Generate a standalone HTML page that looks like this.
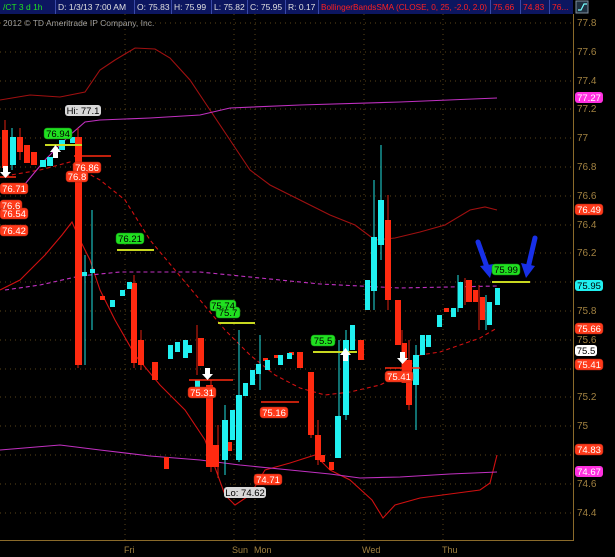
<!DOCTYPE html><html><head><style>
body{margin:0;background:#000;width:615px;height:557px;overflow:hidden;font-family:"Liberation Sans",sans-serif}
</style></head><body>
<svg width="615" height="557" xmlns="http://www.w3.org/2000/svg" style="display:block">
<rect width="615" height="557" fill="#000"/>
<rect x="0" y="0" width="573" height="14" fill="#0c1660"/>
<g stroke="#3a4aa8" stroke-width="1">
<line x1="55.5" y1="0" x2="55.5" y2="14"/><line x1="134.5" y1="0" x2="134.5" y2="14"/><line x1="171.5" y1="0" x2="171.5" y2="14"/><line x1="211.5" y1="0" x2="211.5" y2="14"/><line x1="247.5" y1="0" x2="247.5" y2="14"/><line x1="285.5" y1="0" x2="285.5" y2="14"/><line x1="318.5" y1="0" x2="318.5" y2="14"/><line x1="490.5" y1="0" x2="490.5" y2="14"/><line x1="520.5" y1="0" x2="520.5" y2="14"/><line x1="549.5" y1="0" x2="549.5" y2="14"/>
</g>
<g font-size="8.5" fill="#e0e0e0">
<text x="3" y="10" fill="#20e020">/CT 3 d 1h</text>
<text x="58" y="10">D: 1/3/13 7:00 AM</text>
<text x="137" y="10">O: 75.83</text>
<text x="174" y="10">H: 75.99</text>
<text x="214" y="10">L: 75.82</text>
<text x="250" y="10">C: 75.95</text>
<text x="288" y="10">R: 0.17</text>
<text x="321" y="10" fill="#ff2020" textLength="166" lengthAdjust="spacingAndGlyphs">BollingerBandsSMA (CLOSE, 0, 25, -2.0, 2.0)</text>
<text x="493" y="10" fill="#ff2020">75.66</text>
<text x="523" y="10" fill="#ff2020">74.83</text>
<text x="552" y="10" fill="#ff2020">76...</text>
</g>
<rect x="576" y="1" width="12" height="12" fill="#203040" stroke="#8090a0"/>
<path d="M578 10h3l3-6h3" stroke="#7ff" fill="none" stroke-width="1.2"/>
<text x="3" y="26" font-size="8.5" fill="#a0a0a0">2012 © TD Ameritrade IP Company, Inc.</text>
<g stroke="#5a4418" stroke-dasharray="1,4" stroke-width="1">
<line x1="0" y1="23" x2="573" y2="23"/><line x1="0" y1="52" x2="573" y2="52"/><line x1="0" y1="81" x2="573" y2="81"/><line x1="0" y1="109" x2="573" y2="109"/><line x1="0" y1="138" x2="573" y2="138"/><line x1="0" y1="167" x2="573" y2="167"/><line x1="0" y1="196" x2="573" y2="196"/><line x1="0" y1="225" x2="573" y2="225"/><line x1="0" y1="253" x2="573" y2="253"/><line x1="0" y1="282" x2="573" y2="282"/><line x1="0" y1="311" x2="573" y2="311"/><line x1="0" y1="340" x2="573" y2="340"/><line x1="0" y1="369" x2="573" y2="369"/><line x1="0" y1="397" x2="573" y2="397"/><line x1="0" y1="426" x2="573" y2="426"/><line x1="0" y1="455" x2="573" y2="455"/><line x1="0" y1="484" x2="573" y2="484"/><line x1="0" y1="513" x2="573" y2="513"/>
<line x1="125" y1="14" x2="125" y2="540"/><line x1="234" y1="14" x2="234" y2="540"/><line x1="255" y1="14" x2="255" y2="540"/><line x1="364" y1="14" x2="364" y2="540"/><line x1="443" y1="14" x2="443" y2="540"/>
</g>
<g stroke="#8a6a2a"><line x1="573.5" y1="14" x2="573.5" y2="541"/><line x1="0" y1="540.5" x2="574" y2="540.5"/></g>
<g font-size="10" fill="#a08040">
<text x="577" y="26">77.8</text><text x="577" y="55">77.6</text><text x="577" y="84">77.4</text><text x="577" y="112">77.2</text><text x="577" y="141">77</text><text x="577" y="170">76.8</text><text x="577" y="199">76.6</text><text x="577" y="228">76.4</text><text x="577" y="256">76.2</text><text x="577" y="314">75.8</text><text x="577" y="343">75.6</text><text x="577" y="400">75.2</text><text x="577" y="429">75</text><text x="577" y="487">74.6</text><text x="577" y="516">74.4</text>
<text x="124" y="553" font-size="9">Fri</text><text x="232" y="553" font-size="9">Sun</text><text x="254" y="553" font-size="9">Mon</text><text x="362" y="553" font-size="9">Wed</text><text x="442" y="553" font-size="9">Thu</text>
</g>
<g fill="none" stroke-width="1.1">
<polyline stroke="#a01010" points="0,100 30,95 60,97 85,92 100,70 115,60 135,48 155,49 170,58 190,80 210,110 230,140 250,170 270,185 290,195 310,205 330,215 355,225 375,240 395,238 420,232 445,225 470,210 485,207 497,210"/>
<polyline stroke="#d01010" points="0,290 20,280 45,255 62,235 72,222 80,240 90,260 100,290 115,320 135,355 160,385 185,410 205,440 225,495 235,505 250,495 265,470 290,463 315,455 330,470 350,480 372,500 383,518 395,505 420,498 450,494 480,490 490,483 497,455"/>
<polyline stroke="#d01010" stroke-dasharray="4,3" points="5,176 40,170 70,162 78,168 100,180 125,200 150,240 175,270 200,300 225,330 250,355 275,375 300,388 325,395 350,392 380,385 400,375 420,355 440,352 460,345 480,338 497,328"/>
<polyline stroke="#c030c0" points="20,190 45,160 70,135 85,122 100,120 150,118 200,115 230,108 300,105 400,102 497,98"/>
<polyline stroke="#c030c0" points="0,450 60,445 100,450 150,456 200,460 240,465 290,470 330,474 360,478 400,477 450,474 497,472"/>
<polyline stroke="#c030c0" stroke-dasharray="4,3" points="5,290 40,285 80,276 120,272 200,272 260,278 320,284 400,288 497,286"/>
</g>
<g>
<g stroke="#e02010"><line x1="5" y1="120" x2="5" y2="172"/><line x1="20" y1="128" x2="20" y2="160"/><line x1="78" y1="128" x2="78" y2="368"/><line x1="134" y1="275" x2="134" y2="368"/><line x1="141" y1="330" x2="141" y2="370"/><line x1="211" y1="380" x2="211" y2="472"/><line x1="311" y1="372" x2="311" y2="438"/><line x1="318" y1="420" x2="318" y2="465"/><line x1="388" y1="195" x2="388" y2="310"/><line x1="402" y1="330" x2="402" y2="383"/><line x1="409" y1="340" x2="409" y2="410"/><line x1="479" y1="285" x2="479" y2="330"/><line x1="465" y1="278" x2="465" y2="305"/><line x1="218" y1="425" x2="218" y2="478"/><line x1="197" y1="325" x2="197" y2="375"/></g>
<g stroke="#20e0e0"><line x1="12" y1="128" x2="12" y2="170"/><line x1="85" y1="255" x2="85" y2="365"/><line x1="92" y1="210" x2="92" y2="330"/><line x1="225" y1="405" x2="225" y2="475"/><line x1="239" y1="330" x2="239" y2="462"/><line x1="260" y1="335" x2="260" y2="390"/><line x1="339" y1="340" x2="339" y2="440"/><line x1="346" y1="330" x2="346" y2="420"/><line x1="374" y1="180" x2="374" y2="310"/><line x1="381" y1="145" x2="381" y2="260"/><line x1="416" y1="345" x2="416" y2="430"/><line x1="458" y1="275" x2="458" y2="312"/><line x1="486" y1="295" x2="486" y2="330"/></g>
<g fill="#ff2a10">
<rect x="2" y="130" width="6" height="38"/><rect x="17" y="137" width="6" height="15"/><rect x="24" y="145" width="6" height="18"/><rect x="31" y="152" width="6" height="13"/><rect x="75" y="137" width="7" height="228"/><rect x="100" y="296" width="5" height="4"/><rect x="131" y="283" width="6" height="80"/><rect x="138" y="340" width="6" height="25"/><rect x="152" y="362" width="6" height="18"/><rect x="198" y="338" width="6" height="28"/><rect x="206" y="385" width="7" height="82"/><rect x="213" y="445" width="6" height="22"/><rect x="227" y="442" width="5" height="9"/><rect x="263" y="358" width="5" height="3"/><rect x="274" y="355" width="5" height="3"/><rect x="289" y="352" width="5" height="3"/><rect x="297" y="352" width="6" height="16"/><rect x="308" y="372" width="6" height="63"/><rect x="315" y="435" width="6" height="25"/><rect x="320" y="455" width="5" height="7"/><rect x="329" y="462" width="5" height="8"/><rect x="358" y="340" width="6" height="20"/><rect x="385" y="220" width="6" height="80"/><rect x="395" y="300" width="6" height="45"/><rect x="402" y="343" width="5" height="40"/><rect x="406" y="360" width="6" height="45"/><rect x="444" y="308" width="5" height="4"/><rect x="466" y="280" width="6" height="22"/><rect x="473" y="290" width="5" height="12"/><rect x="480" y="297" width="5" height="23"/><rect x="164" y="457" width="5" height="12"/></g>
<g fill="#20f0f0">
<rect x="10" y="137" width="6" height="28"/><rect x="40" y="160" width="6" height="7"/><rect x="47" y="157" width="6" height="9"/><rect x="59" y="140" width="6" height="10"/><rect x="70" y="137" width="5" height="6"/><rect x="82" y="272" width="5" height="4"/><rect x="90" y="269" width="5" height="4"/><rect x="110" y="300" width="5" height="7"/><rect x="120" y="290" width="5" height="6"/><rect x="127" y="282" width="5" height="7"/><rect x="168" y="345" width="5" height="14"/><rect x="175" y="342" width="5" height="10"/><rect x="183" y="340" width="5" height="18"/><rect x="222" y="420" width="6" height="40"/><rect x="230" y="410" width="5" height="30"/><rect x="236" y="395" width="6" height="65"/><rect x="243" y="383" width="5" height="13"/><rect x="250" y="370" width="5" height="15"/><rect x="256" y="364" width="5" height="10"/><rect x="265" y="360" width="5" height="10"/><rect x="278" y="355" width="5" height="10"/><rect x="287" y="353" width="5" height="6"/><rect x="335" y="416" width="6" height="42"/><rect x="343" y="340" width="6" height="75"/><rect x="350" y="325" width="5" height="25"/><rect x="365" y="280" width="5" height="30"/><rect x="371" y="237" width="6" height="54"/><rect x="378" y="200" width="6" height="45"/><rect x="413" y="355" width="6" height="30"/><rect x="420" y="335" width="5" height="20"/><rect x="426" y="335" width="5" height="12"/><rect x="437" y="315" width="5" height="12"/><rect x="451" y="308" width="5" height="9"/><rect x="458" y="282" width="5" height="26"/><rect x="487" y="302" width="5" height="23"/><rect x="495" y="288" width="5" height="17"/><rect x="195" y="380" width="5" height="8"/><rect x="187" y="345" width="5" height="8"/></g>
</g>
<g stroke="#c8d820" stroke-width="2"><line x1="45" y1="145" x2="82" y2="145"/><line x1="117" y1="250" x2="154" y2="250"/><line x1="218" y1="323" x2="255" y2="323"/><line x1="313" y1="352" x2="357" y2="352"/><line x1="492" y1="282" x2="530" y2="282"/></g>
<g stroke="#ff2a10" stroke-width="1.5"><line x1="74" y1="156" x2="111" y2="156"/><line x1="0" y1="177" x2="16" y2="177"/><line x1="189" y1="380" x2="233" y2="380"/><line x1="261" y1="402" x2="299" y2="402"/><line x1="385" y1="368" x2="420" y2="368"/></g>
<g fill="#fff"><path d="M3 166h5v6h3l-5.5 6-5.5-6h3z"/><path d="M53 158h5v-6h3l-5.5-7-5.5 7h3z"/><path d="M205 368h5v6h3l-5.5 6-5.5-6h3z"/><path d="M343 361h5v-6h3l-5.5-7-5.5 7h3z"/><path d="M400 352h5v6h3l-5.5 6-5.5-6h3z"/></g>
<g stroke="#1830e8" stroke-width="5" fill="none" stroke-linecap="round"><path d="M478 242 L488 270"/><path d="M535 238 L528 268"/></g>
<g fill="#1830e8"><path d="M480 266l10 12 4-14z"/><path d="M521 263l5 15 9-12z"/></g>
<g font-size="9.5" text-anchor="middle">
<g fill="#ff3a1a" stroke="#a02010" stroke-width="0.5">
<rect x="73" y="162" width="28" height="11" rx="3"/><rect x="66" y="171" width="22" height="11" rx="3"/>
<rect x="0" y="183" width="28" height="11" rx="3"/><rect x="0" y="200" width="22" height="11" rx="3"/><rect x="0" y="208" width="28" height="11" rx="3"/><rect x="0" y="225" width="28" height="11" rx="3"/>
<rect x="188" y="387" width="28" height="11" rx="3"/><rect x="260" y="407" width="28" height="11" rx="3"/><rect x="254" y="474" width="28" height="11" rx="3"/><rect x="385" y="371" width="28" height="11" rx="3"/>
<rect x="575" y="204" width="28" height="11" rx="3"/><rect x="575" y="323" width="28" height="11" rx="3"/><rect x="575" y="359" width="28" height="11" rx="3"/><rect x="575" y="444" width="28" height="11" rx="3"/>
</g>
<g fill="#fff"><text x="87" y="171">76.86</text><text x="77" y="180">76.8</text><text x="14" y="192">76.71</text><text x="11" y="209">76.6</text><text x="14" y="217">76.54</text><text x="14" y="234">76.42</text><text x="202" y="396">75.31</text><text x="274" y="416">75.16</text><text x="268" y="483">74.71</text><text x="399" y="380">75.41</text><text x="589" y="213">76.49</text><text x="589" y="332">75.66</text><text x="589" y="368">75.41</text><text x="589" y="453">74.83</text></g>
<g fill="#20e020" stroke="#108010" stroke-width="0.5"><rect x="44" y="128" width="28" height="11" rx="3"/><rect x="116" y="233" width="28" height="11" rx="3"/><rect x="210" y="300" width="26" height="11" rx="3"/><rect x="216" y="307" width="24" height="11" rx="3"/><rect x="311" y="335" width="24" height="11" rx="3"/><rect x="492" y="264" width="28" height="11" rx="3"/></g>
<g fill="#000"><text x="58" y="137">76.94</text><text x="130" y="242">76.21</text><text x="223" y="309">75.74</text><text x="228" y="316">75.7</text><text x="323" y="344">75.5</text><text x="506" y="273">75.99</text></g>
<rect x="65" y="105" width="36" height="11" rx="3" fill="#d8d8d8"/><text x="83" y="114" fill="#000">Hi: 77.1</text>
<rect x="224" y="487" width="42" height="11" rx="3" fill="#d8d8d8"/><text x="245" y="496" fill="#000">Lo: 74.62</text>
<rect x="575" y="92" width="28" height="11" rx="3" fill="#ff30e0"/><text x="589" y="101" fill="#fff">77.27</text>
<rect x="575" y="280" width="28" height="11" rx="3" fill="#20f0f0"/><text x="589" y="289" fill="#000">75.95</text>
<rect x="575" y="345" width="22" height="11" rx="3" fill="#fff"/><text x="586" y="354" fill="#000">75.5</text>
<rect x="575" y="466" width="28" height="11" rx="3" fill="#ff30e0"/><text x="589" y="475" fill="#fff">74.67</text>
</g>
</svg>
</body></html>
